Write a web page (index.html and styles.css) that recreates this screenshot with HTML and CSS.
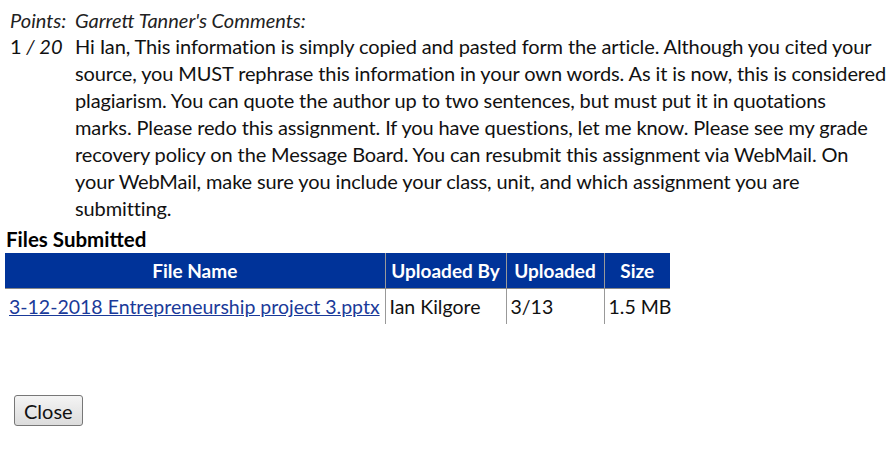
FILE: index.html
```html
<!DOCTYPE html>
<html>
<head>
<meta charset="utf-8">
<link rel="stylesheet" href="styles.css">
</head>
<body>
<div class="comments">
  <div class="col-points">
    <div class="label">Points:</div>
    <div class="score">1<span class="slash"> / 20</span></div>
  </div>
  <div class="col-text">
    <div class="label">Garrett Tanner's Comments:</div>
    <div class="text">Hi Ian, This information is simply copied and pasted form the article. Although you cited your<br>source, you MUST rephrase this information in your own words. As it is now, this is considered<br>plagiarism. You can quote the author up to two sentences, but must put it in quotations<br>marks. Please redo this assignment. If you have questions, let me know. Please see my grade<br>recovery policy on the Message Board. You can resubmit this assignment via WebMail. On<br>your WebMail, make sure you include your class, unit, and which assignment you are<br>submitting.</div>
  </div>
</div>
<div class="files-title">Files Submitted</div>
<table class="files">
  <colgroup><col class="w-name"><col class="w-by"><col class="w-up"><col class="w-size"></colgroup>
  <thead>
    <tr><th>File Name</th><th>Uploaded By</th><th>Uploaded</th><th>Size</th></tr>
  </thead>
  <tbody>
    <tr><td><a href="#">3-12-2018 Entrepreneurship project 3.pptx</a></td><td>Ian Kilgore</td><td>3/13</td><td>1.5 MB</td></tr>
  </tbody>
</table>
<div class="actions"><button class="close-btn">Close</button></div>
</body>
</html>
```
FILE: styles.css
```css
html, body { margin: 0; padding: 0; background: #fff; }
body {
  font-family: Lato, "Open Sans", sans-serif;
  font-size: 20px;
  color: #111;
  padding: 8px 3px 0 5px;
}
.comments { display: flex; }
.col-points { width: 65px; padding-left: 5px; flex: none; }
.col-text { flex: 1; }
.label { font-style: italic; color: #222; line-height: 25px; }
.score { line-height: 27px; }
.slash { font-style: italic; }
.text { line-height: 27px; letter-spacing: -0.12px; }
.files-title { font-weight: bold; font-size: 20.5px; line-height: 22px; margin-top: 6px; padding-left: 1px; color: #000; }
.files { border-collapse: collapse; margin-top: 3px; table-layout: fixed; width: 665px; }
.w-name { width: 380px; }
.w-by { width: 121px; }
.w-up { width: 98px; }
.w-size { width: 66px; }
.files th {
  background: #003399; color: #fff; font-weight: bold; font-size: 19px;
  height: 35px; padding: 0 2px; border-left: 1px solid #999; border-bottom: 1px solid #888;
  white-space: nowrap;
}
.files th:first-child, .files td:first-child { border-left: none; }
.files td { height: 35px; padding: 0 4px; border-left: 1px solid #999; font-size: 19.5px; white-space: nowrap; }
.files a { color: #1a3a99; }
.actions { padding: 71px 0 0 9px; }
.close-btn {
  font-family: Lato, "Open Sans", sans-serif; font-size: 20px;
  height: 31px; padding: 0 9px; border: 1px solid #777; border-radius: 3px;
  background: linear-gradient(#f4f4f4, #dcdcdc); color: #111;
}
```
